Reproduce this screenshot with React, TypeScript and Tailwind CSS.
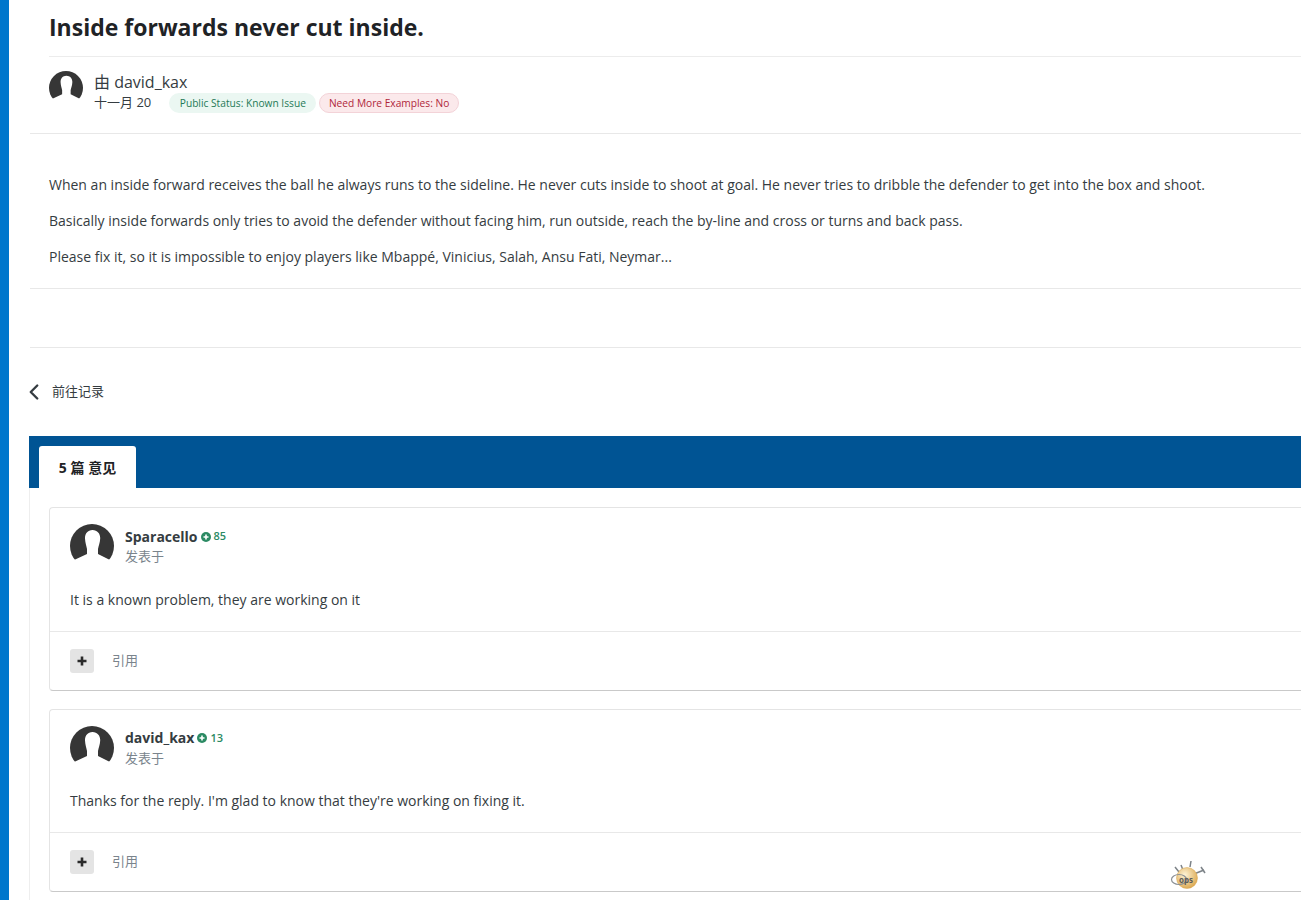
import { ChevronLeft } from "lucide-react";

const FONT = "font-['Open_Sans','Noto_Sans_CJK_SC',sans-serif]";

// Default silhouette avatar, white figure cut out of a dark disc
function Avatar({ size }: { size: string }) {
  return (
    <svg viewBox="0 0 44 44" className={`${size} shrink-0`}>
      <circle cx="22" cy="22" r="22" fill="#363636" />
      <path
        d="M22.500 6C17.500 6 14.800 10 15 14.500C15.200 19 16.500 22 17 25L17 30L3 36.500L3 46L41 46L41 36.500L28 30L28 25C28.500 22 30 19 30.200 14.500C30.400 10 27.500 6 22.500 6z"
        fill="#fff"
      />
    </svg>
  );
}

function Badge({ tone, children }: { tone: "green" | "red"; children: string }) {
  return (
    <span
      className={
        tone === "green"
          ? "h-5 px-[10.5px] rounded-full text-[10.2px] leading-5 bg-[#ebf7f2] text-[#1f7a57]"
          : "h-5 px-[8.5px] rounded-full text-[10.2px] leading-[18px] bg-[#fbe9eb] text-[#b0263a] border border-[#f3d3d8]"
      }
    >
      {children}
    </span>
  );
}

function Comment({ name, rep, text }: { name: string; rep: number; text: string }) {
  return (
    <div className="border border-[#e4e4e4] border-b-[#c9c9c9] border-r-0 rounded-l-[4px] bg-white">
      <div className="flex items-start gap-[11px] pl-5 pt-4">
        <Avatar size="w-11 h-11" />
        <div className="mt-[2.9px]">
          <div className="flex items-center gap-[3px] h-[19.3px]">
            <span className="text-sm font-bold text-[#353c41]">{name}</span>
            <span className="flex items-center gap-[3px] text-[11px] font-semibold text-[#2b8a63]">
              <svg viewBox="0 0 10 10" className="w-[10px] h-[10px]">
                <circle cx="5" cy="5" r="5" fill="#2b8a63" />
                <path d="M5 2.500v5M2.500 5h5" stroke="#fff" strokeWidth="1.600" />
              </svg>
              {rep}
            </span>
          </div>
          <div className="text-[13px] leading-5 text-[#7a848c]">发表于</div>
        </div>
      </div>
      <p className="pl-5 mt-[20.6px] text-sm leading-[22px] text-[#353c41]">{text}</p>
      <div className="mt-5 border-t border-[#e8e8e8] h-[59px] pl-5 flex items-center gap-[18px]">
        <span className="w-6 h-6 rounded-[3px] bg-[#e4e4e4] flex items-center justify-center">
          <svg viewBox="0 0 10 10" className="w-[10px] h-[10px]">
            <path d="M5 0.500v9M0.500 5h9" stroke="#2a2a2a" strokeWidth="2.600" />
          </svg>
        </span>
        <span className="text-[13px] text-[#7a848c]">引用</span>
      </div>
    </div>
  );
}

export default function App() {
  return (
    <div className={`${FONT} relative h-screen overflow-hidden bg-white flex`}>
      <div className="w-[9px] shrink-0 bg-[#0077cc]" />
      <main className="flex-1 min-w-0 pl-[21px] flex flex-col">
        {/* Title and author */}
        <div className="border-b border-[#e8e8e8] pb-5">
          <div className="ml-[19px]">
            <h1 className="h-[57px] border-b border-[#ececec] text-[23px] font-bold leading-[54px] text-[#1f2326]">
              Inside forwards never cut inside.
            </h1>
            <div className="flex items-start gap-[11px] pt-[14px]">
              <Avatar size="w-[34px] h-[34px]" />
              <div className="mt-[1px]">
                <div className="text-base leading-5 text-[#353c41]">由 david_kax</div>
                <div className="flex items-center h-5 mt-[1px]">
                  <span className="text-[13px] text-[#353c41] mr-[18px]">十一月 20</span>
                  <Badge tone="green">Public Status: Known Issue</Badge>
                  <span className="w-[3px]" />
                  <Badge tone="red">Need More Examples: No</Badge>
                </div>
              </div>
            </div>
          </div>
        </div>

        {/* Post body */}
        <div className="border-b border-[#e8e8e8] pl-[19px] pt-[40px] pb-[20px] flex flex-col gap-[14px] text-sm leading-[22px] text-[#353c41]">
          <p>When an inside forward receives the ball he always runs to the sideline. He never cuts inside to shoot at goal. He never tries to dribble the defender to get into the box and shoot.</p>
          <p>Basically inside forwards only tries to avoid the defender without facing him, run outside, reach the by-line and cross or turns and back pass.</p>
          <p>Please fix it, so it is impossible to enjoy players like Mbappé, Vinicius, Salah, Ansu Fati, Neymar...</p>
        </div>
        <div className="h-[59px] border-b border-[#e8e8e8]" />

        <div className="flex items-center h-[88px] text-[13px] text-[#353c41]">
          <ChevronLeft className="w-[26px] h-[26px] -ml-[9px] mr-[5px] text-[#353c41]" strokeWidth={2.200} />
          前往记录
        </div>

        {/* Comments */}
        <div className="flex-1 flex flex-col -ml-[1px]">
          <div className="h-[52px] bg-[#005494] pl-[10px] pt-[10px]">
            <div className="w-[97px] h-[42px] pt-[2px] rounded-t-[3px] bg-white flex items-center justify-center text-sm font-bold text-[#1f2326]">
              5 篇 意见
            </div>
          </div>
          <div className="flex-1 border-l border-[#eeeeee] pl-[19px] pt-[19px] flex flex-col gap-[18px]">
            <Comment name="Sparacello" rep={85} text="It is a known problem, they are working on it" />
            <Comment name="david_kax" rep={13} text="Thanks for the reply. I'm glad to know that they're working on fixing it." />
          </div>
        </div>
      </main>

      {/* Floating "oops" bulb */}
      <svg viewBox="0 0 40 36" className="absolute left-[1168px] top-[858px] w-10 h-9">
        <defs>
          <radialGradient id="bulb" cx="0.400" cy="0.350" r="0.700">
            <stop offset="0" stopColor="#fdf3d6" />
            <stop offset="1" stopColor="#dba64c" />
          </radialGradient>
        </defs>
        <path d="M7 9l4 5M13 7l2 5M23 3l-1 6" stroke="#7d8388" strokeWidth="1.500" fill="none" />
        <path d="M26 16l10-4" stroke="#7d8388" strokeWidth="1.800" fill="none" />
        <path d="M33 9l4 6" stroke="#7d8388" strokeWidth="1.500" fill="none" />
        <circle cx="19" cy="20" r="10.500" fill="url(#bulb)" stroke="#d9a64e" strokeWidth="0.500" />
        <ellipse cx="11" cy="21.500" rx="7.500" ry="5" fill="none" stroke="#8a8f94" strokeWidth="1.200" />
        <text x="18" y="25" fontSize="8" fontWeight="700" fill="#5a5a5a" textAnchor="middle">ops</text>
      </svg>
    </div>
  );
}
